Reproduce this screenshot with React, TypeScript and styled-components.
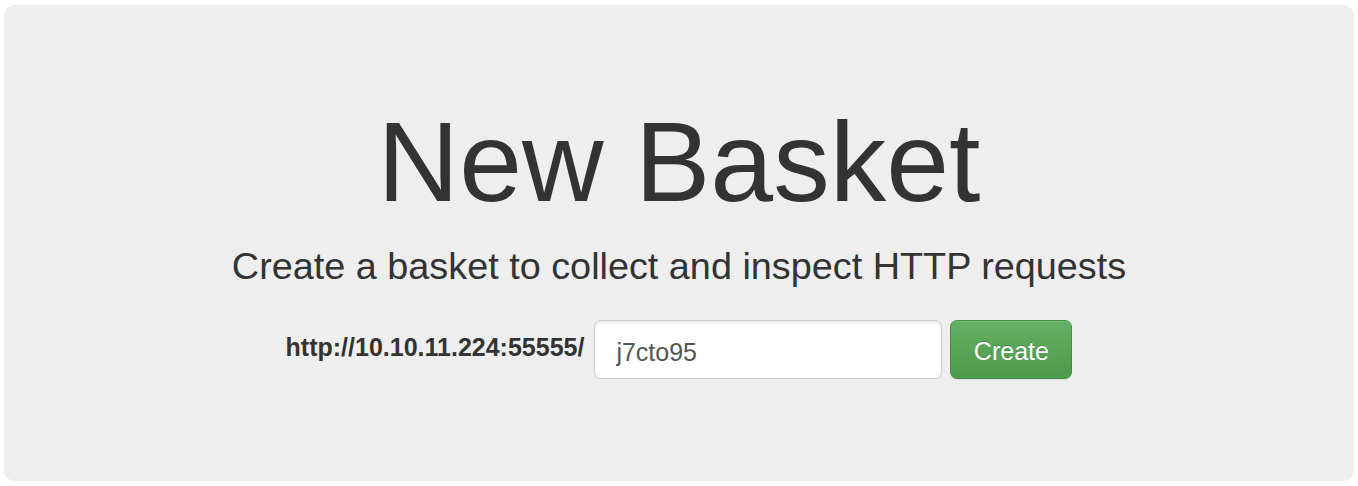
import React from "react";
import styled, { createGlobalStyle } from "styled-components";

const GlobalStyle = createGlobalStyle`
	html, body {
		margin: 0;
		padding: 0;
		background: #fff;
	}
	body {
		font-family: "Liberation Sans", Arial, Helvetica, sans-serif;
		color: #333;
	}
`;

const App: React.FC = () => {
	return (
		<>
			<GlobalStyle />
			<Jumbotron>
				<Title>New Basket</Title>
				<Lead>Create a basket to collect and inspect HTTP requests</Lead>
				<Form onSubmit={(e) => e.preventDefault()}>
					<UrlLabel htmlFor="basket_name">http://10.10.11.224:55555/</UrlLabel>
					<NameInput id="basket_name" type="text" defaultValue="j7cto95" />
					<CreateButton type="submit">Create</CreateButton>
				</Form>
			</Jumbotron>
		</>
	);
};

export default App;

const Jumbotron = styled.div`
	display: flex;
	flex-direction: column;
	align-items: center;
	box-sizing: border-box;
	margin: 5px 4px;
	height: 476px;
	padding-top: 95px;
	background: #eee;
	border-radius: 11px;
`;

const Title = styled.h1`
	margin: 0;
	font-size: 113px;
	font-weight: 400;
	line-height: 1.1;
	color: #333;
`;

const Lead = styled.p`
	margin: 16px 0 0;
	font-size: 37.8px;
	font-weight: 400;
	line-height: 1.4;
	color: #333;
`;

const Form = styled.form`
	display: flex;
	align-items: flex-start;
	gap: 8px;
	margin-top: 27px;
`;

const UrlLabel = styled.label`
	margin-right: 2px;
	padding-top: 9px;
	font-size: 25px;
	font-weight: 700;
	line-height: 36px;
	color: #333;
`;

const NameInput = styled.input`
	box-sizing: border-box;
	width: 348px;
	height: 59px;
	padding: 6px 21px 0;
	font-family: "Liberation Sans", Arial, sans-serif;
	font-size: 25px;
	color: #555;
	background: #fff;
	border: 1px solid #ccc;
	border-radius: 7px;
	box-shadow: inset 0 2px 2px rgba(0, 0, 0, 0.075);
	outline: none;
`;

const CreateButton = styled.button`
	box-sizing: border-box;
	width: 122px;
	height: 59px;
	padding: 3px 0 0;
	font-family: "Liberation Sans", Arial, sans-serif;
	font-size: 25px;
	color: #fff;
	text-shadow: 0 -1px 0 rgba(0, 0, 0, 0.2);
	background: linear-gradient(to bottom, #64b064 0%, #4c9a4c 100%);
	border: 1px solid #3e8f3e;
	border-radius: 7px;
	box-shadow: inset 0 1px 0 rgba(255, 255, 255, 0.15), 0 1px 1px rgba(0, 0, 0, 0.075);
	cursor: pointer;
`;
